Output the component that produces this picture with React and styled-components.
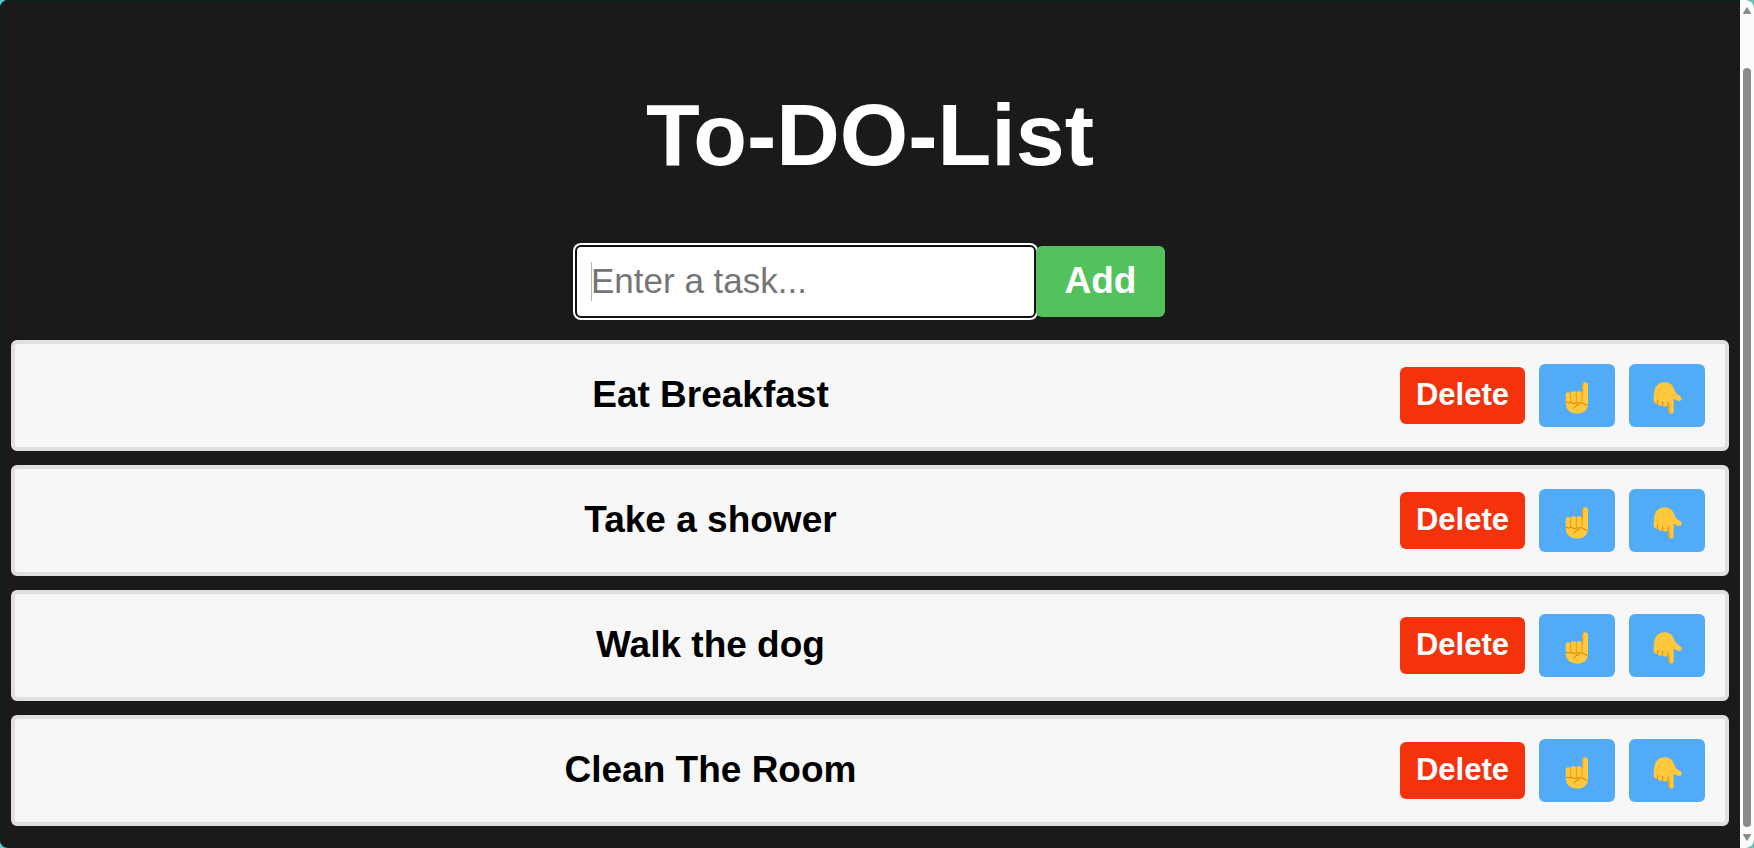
import React, { useState } from "react";
import styled, { createGlobalStyle } from "styled-components";

const GlobalStyle = createGlobalStyle`
  *, *::before, *::after { box-sizing: border-box; }
  body {
    margin: 0;
    background: #5ec8c8;
    font-family: "Liberation Sans", Arial, sans-serif;
  }
`;

const Frame = styled.div`
  display: flex;
  min-height: 100vh;
  border-radius: 8px;
  overflow: hidden;
  background: #1a1a1a;
`;

const Page = styled.main`
  flex: 1;
  min-width: 0;
  padding: 82px 11px 22px 10px;
  border-top: 1px solid #0a2622;
  border-left: 1px solid #0a2622;
`;

const Title = styled.h1`
  margin: 0 0 59px;
  color: #fff;
  font-size: 88px;
  line-height: 103px;
  font-weight: bold;
  text-align: center;
`;

const TaskForm = styled.form`
  display: flex;
  justify-content: center;
  align-items: center;
  margin-bottom: 22px;
`;

const Field = styled.label`
  position: relative;
  width: 461px;

  &::before {
    content: "";
    position: absolute;
    left: 16px;
    top: 17px;
    width: 1px;
    height: 39px;
    background: #b4b4b4;
  }
`;

const TaskInput = styled.input`
  display: block;
  width: 100%;
  height: 73px;
  padding: 0 14px 2px;
  border: 2px solid #111;
  border-radius: 6px;
  background: #fff;
  color: #000;
  box-shadow: 0 0 0 2px #fff;
  font-family: inherit;
  font-size: 35px;
  outline: none;

  &::placeholder { color: #757575; opacity: 1; }
`;

const Button = styled.button`
  border: 0;
  border-radius: 6px;
  color: #fff;
  font-family: inherit;
  font-weight: bold;
  cursor: pointer;
`;

const AddButton = styled(Button)`
  position: relative;
  width: 129px;
  height: 71px;
  padding: 0 0 2px;
  background: #54c25c;
  font-size: 37px;
`;

const DeleteButton = styled(Button)`
  height: 57px;
  width: 125px;
  padding: 0 0 2px;
  background: #f4330d;
  font-size: 31px;
`;

const MoveButton = styled(Button)`
  display: flex;
  align-items: center;
  justify-content: center;
  width: 76px;
  height: 63px;
  padding: 4px 0 0;
  background: #52abf7;
`;

const TaskList = styled.ol`
  display: flex;
  flex-direction: column;
  gap: 14px;
  margin: 0;
  padding: 0;
  list-style: none;
`;

const TaskItem = styled.li`
  display: flex;
  align-items: center;
  gap: 14px;
  padding: 20px;
  border: 4px solid #e0e0e0;
  border-radius: 6px;
  background: #f7f7f7;
`;

const TaskText = styled.span`
  flex: 1;
  padding-bottom: 2px;
  color: #000;
  font-size: 37px;
  line-height: 42px;
  font-weight: bold;
  text-align: center;
`;

const ScrollTrack = styled.div`
  display: flex;
  flex-direction: column;
  align-items: center;
  width: 14px;
  padding: 7px 0;
  background: #fcfcfc;
`;

const ScrollThumb = styled.div`
  flex: 1;
  width: 8px;
  margin: 54px 0 7px;
  border-radius: 4px;
  background: #8b8b8b;
`;

const Up = () => (
  <svg width="24" height="32" viewBox="0 0 72 96" aria-hidden="true">
    <path d="M52 9Q52 1 60 1Q69 1 69 9V65Q69 94 36 95Q3 94 2 64V38Q2 31 9 31Q14 31 16 34Q17 28 25 28Q32 28 34 32Q37 27 43 28Q49 29 52 32Z" fill="#ffc83d" />
    <path d="M53 34V9Q53 3 57 2" fill="none" stroke="#e59b20" strokeWidth="3" />
    <path d="M17 35V60M34 33V61M51 32V57" fill="none" stroke="#e59b20" strokeWidth="3" strokeLinecap="round" />
    <path d="M4 61Q10 66 18 61Q26 67 36 63Q50 58 66 70" fill="none" stroke="#d67d08" strokeWidth="3" strokeLinecap="round" />
    <path d="M26 79Q30 69 43 67" fill="none" stroke="#d67d08" strokeWidth="3" strokeLinecap="round" />
  </svg>
);

const Down = () => (
  <svg width="29" height="32" viewBox="0 0 87 96" aria-hidden="true">
    <path d="M2 58Q1 27 10 13Q19 1 35 1Q52 2 59 13Q64 23 69 34L82 43Q89 49 84 55Q79 60 62 50V88Q62 95 55 95Q47 95 46 88V72Q43 75 39 72Q36 75 30 73L28 70Q23 72 15 68L12 65Q4 66 2 58Z" fill="#ffc83d" />
    <path d="M14 66V55M29 70V58M45 72V60" fill="none" stroke="#d98a14" strokeWidth="3" strokeLinecap="round" />
    <path d="M48 70V88Q49 92 52 93" fill="none" stroke="#e59b20" strokeWidth="4" />
  </svg>
);

const move = (list, from, to) => {
  if (to < 0 || to >= list.length) return list;
  const next = [...list];
  [next[from], next[to]] = [next[to], next[from]];
  return next;
};

export default function App() {
  const [tasks, setTasks] = useState(["Eat Breakfast", "Take a shower", "Walk the dog", "Clean The Room"]);
  const [draft, setDraft] = useState("");

  const addTask = (event) => {
    event.preventDefault();
    if (draft.trim()) setTasks([...tasks, draft.trim()]);
    setDraft("");
  };

  return (
    <>
      <GlobalStyle />
      <Frame>
        <Page>
          <Title>To-DO-List</Title>
          <TaskForm onSubmit={addTask}>
            <Field>
              <TaskInput
                type="text"
                aria-label="Task"
                placeholder="Enter a task..."
                value={draft}
                onChange={(event) => setDraft(event.target.value)}
              />
            </Field>
            <AddButton type="submit">Add</AddButton>
          </TaskForm>
          <TaskList>
            {tasks.map((task, index) => (
              <TaskItem key={task}>
                <TaskText>{task}</TaskText>
                <DeleteButton type="button" onClick={() => setTasks(tasks.filter((_, i) => i !== index))}>
                  Delete
                </DeleteButton>
                <MoveButton type="button" aria-label="Move up" onClick={() => setTasks(move(tasks, index, index - 1))}>
                  <Up />
                </MoveButton>
                <MoveButton type="button" aria-label="Move down" onClick={() => setTasks(move(tasks, index, index + 1))}>
                  <Down />
                </MoveButton>
              </TaskItem>
            ))}
          </TaskList>
        </Page>
        <ScrollTrack aria-hidden="true">
          <svg width="8" height="7" viewBox="0 0 8 7"><path d="M4 0L8 6Q8 7 7 7H1Q0 7 0 6Z" fill="#8b8b8b" /></svg>
          <ScrollThumb />
          <svg width="8" height="7" viewBox="0 0 8 7"><path d="M4 7L8 1Q8 0 7 0H1Q0 0 0 1Z" fill="#8b8b8b" /></svg>
        </ScrollTrack>
      </Frame>
    </>
  );
}
